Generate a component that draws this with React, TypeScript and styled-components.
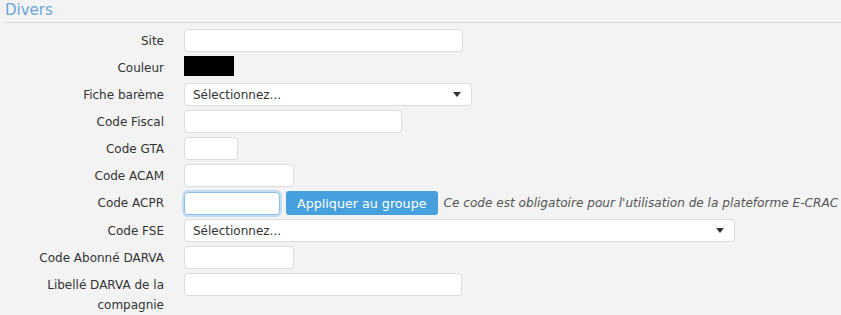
import React from 'react'
import styled, { createGlobalStyle } from 'styled-components'

const GlobalStyle = createGlobalStyle`
  html, body {
    margin: 0;
    padding: 0;
    background: #f3f3f3;
    font-family: "DejaVu Sans", Verdana, sans-serif;
    font-size: 12px;
    color: #333;
  }
`

const Section = styled.section`
  padding: 0 0 0 4px;
`

const Legend = styled.h3`
  margin: 0;
  padding: 1px 0 3px 1px;
  font-size: 15px;
  font-weight: normal;
  line-height: 18px;
  color: #6aa6d8;
  border-bottom: 1px solid #dcdcdc;
`

const Form = styled.div`
  display: grid;
  grid-template-columns: 150px 1fr;
  column-gap: 20px;
  row-gap: 4px;
  padding: 6px 0 0 10px;
`

const Label = styled.label`
  text-align: right;
  line-height: 20px;
  padding-top: 2px;
`

const Field = styled.div<{ $top?: boolean }>`
  display: flex;
  align-items: ${p => (p.$top ? 'flex-start' : 'center')};
  gap: 6px;
  min-height: 23px;
`

const Input = styled.input<{ $w: number; $focus?: boolean }>`
  box-sizing: border-box;
  width: ${p => p.$w}px;
  height: 23px;
  margin: 0;
  padding: 2px 6px;
  border: 1px solid ${p => (p.$focus ? '#8ec0ee' : '#dcdcdc')};
  border-radius: 4px;
  background: #fff;
  font: inherit;
  box-shadow: ${p => (p.$focus ? '0 0 0 2px #c4dcf3' : 'none')};
  outline: none;
`

const Swatch = styled.div`
  align-self: flex-start;
  width: 50px;
  height: 20px;
  background: #000;
`

const Select = styled.div<{ $w: number }>`
  box-sizing: border-box;
  width: ${p => p.$w}px;
  height: 23px;
  display: flex;
  align-items: center;
  justify-content: space-between;
  padding: 0 10px 0 8px;
  border: 1px solid #dcdcdc;
  border-radius: 4px;
  background: #fff;
  color: #333;
`

const Caret = styled.span`
  width: 0;
  height: 0;
  border-left: 4px solid transparent;
  border-right: 4px solid transparent;
  border-top: 5px solid #333;
`

const Button = styled.button`
  height: 24px;
  padding: 0 11px;
  border: none;
  border-radius: 3px;
  background: #45a0dd;
  color: #fff;
  font-family: inherit;
  font-size: 12.7px;
  cursor: pointer;
`

const Help = styled.span`
  font-style: italic;
  color: #555;
  font-size: 12.1px;
`

const App: React.FC = () => (
  <>
    <GlobalStyle />
    <Section>
      <Legend>Divers</Legend>
      <Form>
        <Label>Site</Label>
        <Field><Input $w={279} /></Field>

        <Label>Couleur</Label>
        <Field><Swatch /></Field>

        <Label>Fiche barème</Label>
        <Field>
          <Select $w={288}>Sélectionnez...<Caret /></Select>
        </Field>

        <Label>Code Fiscal</Label>
        <Field><Input $w={218} /></Field>

        <Label>Code GTA</Label>
        <Field><Input $w={54} /></Field>

        <Label>Code ACAM</Label>
        <Field><Input $w={110} /></Field>

        <Label>Code ACPR</Label>
        <Field>
          <Input $w={96} $focus />
          <Button>Appliquer au groupe</Button>
          <Help>Ce code est obligatoire pour l'utilisation de la plateforme E-CRAC</Help>
        </Field>

        <Label>Code FSE</Label>
        <Field>
          <Select $w={551}>Sélectionnez...<Caret /></Select>
        </Field>

        <Label>Code Abonné DARVA</Label>
        <Field><Input $w={110} /></Field>

        <Label>Libellé DARVA de la compagnie</Label>
        <Field $top><Input $w={278} /></Field>
      </Form>
    </Section>
  </>
)

export default App
